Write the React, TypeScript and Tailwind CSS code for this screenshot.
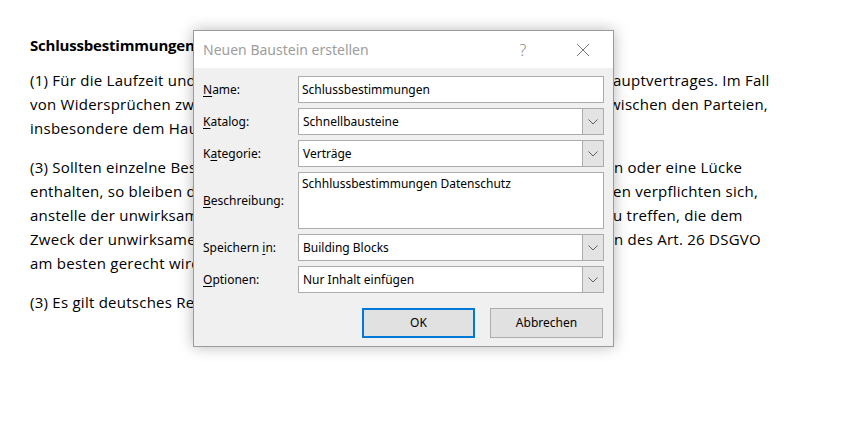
import React from "react";

const docFont = { fontFamily: "'Open Sans', 'Noto Sans', sans-serif" };
const uiFont = { fontFamily: "'Noto Sans', 'Open Sans', sans-serif" };

function Line({ left, right, rightClass = "" }: { left: string; right?: string; rightClass?: string }) {
  return (
    <div className="flex whitespace-nowrap">
      <span className="w-[583px] shrink-0 overflow-hidden">{left}</span>
      {right ? <span className={rightClass}>{right}</span> : null}
    </div>
  );
}

function Chevron() {
  return (
    <svg width="10" height="6" viewBox="0 0 10 6" className="block">
      <polyline points="0.5,0.5 5,5 9.5,0.5" fill="none" stroke="#5f5f5f" strokeWidth="1" />
    </svg>
  );
}

function Label({ children }: { children: React.ReactNode }) {
  return <div className="w-[95px] shrink-0 text-[12px] text-black">{children}</div>;
}

function Combo({ value }: { value: string }) {
  return (
    <div className="flex h-[27px] w-[306px] border border-[#acacac] bg-white">
      <div className="flex flex-1 items-center pl-[4px] text-[12px] text-black">{value}</div>
      <div className="flex w-[21px] items-center justify-center border-l border-[#acacac] bg-[#e3e3e3]">
        <Chevron />
      </div>
    </div>
  );
}

export default function App() {
  return (
    <div className="relative h-[425px] w-[850px] overflow-hidden bg-white">
      <div className="pl-[30px] pt-[33px] text-[15px] leading-[24px] tracking-[0.25px] text-black" style={docFont}>
        <div className="mb-[11px] font-bold tracking-[-0.2px]">Schlussbestimmungen</div>
        <div className="mb-[15px]">
          <Line left="(1) Für die Laufzeit und Gültigkeit dieser Vereinbarung gelten die Regelungen des H" right="auptvertrages. Im Fall" />
          <Line left="von Widersprüchen zwischen dieser Vereinbarung und sonstigen Vereinbarungen z" right="wischen den Parteien," rightClass="-ml-[4px]" />
          <Line left="insbesondere dem Hauptvertrag, gehen die Regelungen dieser Vereinbarung vor." />
        </div>
        <div className="mb-[15px]">
          <Line left="(3) Sollten einzelne Bestimmungen dieser Vereinbarung unwirksam sein oder werde" right="n oder eine Lücke" rightClass="ml-[1px]" />
          <Line left="enthalten, so bleiben die übrigen Bestimmungen hiervon unberührt. Die Parteie" right="en verpflichten sich," />
          <Line left="anstelle der unwirksamen Regelung eine rechtlich zulässige Regelung z" right="u treffen, die dem" />
          <Line left="Zweck der unwirksamen Regelung am nächsten kommt und dabei den Anforderunge" right="n des Art. 26 DSGVO" rightClass="ml-[1px]" />
          <Line left="am besten gerecht wird." />
        </div>
        <div>
          <Line left="(3) Es gilt deutsches Recht." />
        </div>
      </div>

      <div
        className="absolute left-[193px] top-[30px] flex h-[317px] w-[421px] flex-col border border-[#9b9b9b] bg-[#f0f0f0] shadow-[0_0_14px_rgba(0,0,0,0.28)]"
        style={uiFont}
      >
        <div className="flex h-[37px] items-center bg-white">
          <div className="flex-1 pl-[9px] text-[14px] text-[#9d9d9d]">Neuen Baustein erstellen</div>
          <div className="mr-[14px] flex w-[46px] items-center justify-center text-[16px] font-light text-[#8a8a8a]">?</div>
          <div className="mr-[7px] flex w-[46px] items-center justify-center">
            <svg width="14" height="14" viewBox="0 0 14 14">
              <line x1="1" y1="1" x2="13" y2="13" stroke="#7a7a7a" strokeWidth="1" />
              <line x1="13" y1="1" x2="1" y2="13" stroke="#7a7a7a" strokeWidth="1" />
            </svg>
          </div>
        </div>

        <div className="flex flex-1 flex-col px-[9px] pt-[8px]">
          <div className="flex flex-col gap-[5px]">
            <div className="flex items-center">
              <Label>
                <span className="underline underline-offset-2">N</span>ame:
              </Label>
              <div className="flex h-[27px] w-[306px] items-center border border-[#acacac] bg-white pl-[3px] text-[12px] text-black">
                Schlussbestimmungen
              </div>
            </div>
            <div className="flex items-center">
              <Label>
                <span className="underline underline-offset-2">K</span>atalog:
              </Label>
              <Combo value="Schnellbausteine" />
            </div>
            <div className="flex items-center">
              <Label>
                K<span className="underline underline-offset-2">a</span>tegorie:
              </Label>
              <Combo value="Verträge" />
            </div>
            <div className="flex items-center">
              <Label>
                <span className="underline underline-offset-2">B</span>eschreibung:
              </Label>
              <div className="h-[57px] w-[306px] border border-[#acacac] bg-white pl-[3px] pt-[2px] text-[12px] text-black">
                Schhlussbestimmungen Datenschutz
              </div>
            </div>
            <div className="flex items-center">
              <Label>
                Speichern <span className="underline underline-offset-2">i</span>n:
              </Label>
              <Combo value="Building Blocks" />
            </div>
            <div className="flex items-center">
              <Label>
                <span className="underline underline-offset-2">O</span>ptionen:
              </Label>
              <Combo value="Nur Inhalt einfügen" />
            </div>
          </div>

          <div className="mt-[15px] flex justify-end gap-[15px] pr-[1px]">
            <button className="flex h-[30px] w-[113px] items-center justify-center border-2 border-[#0078d7] bg-[#e1e1e1] text-[12px] text-black">
              OK
            </button>
            <button className="flex h-[30px] w-[113px] items-center justify-center border border-[#adadad] bg-[#e1e1e1] text-[12px] text-black">
              Abbrechen
            </button>
          </div>
        </div>
      </div>
    </div>
  );
}
